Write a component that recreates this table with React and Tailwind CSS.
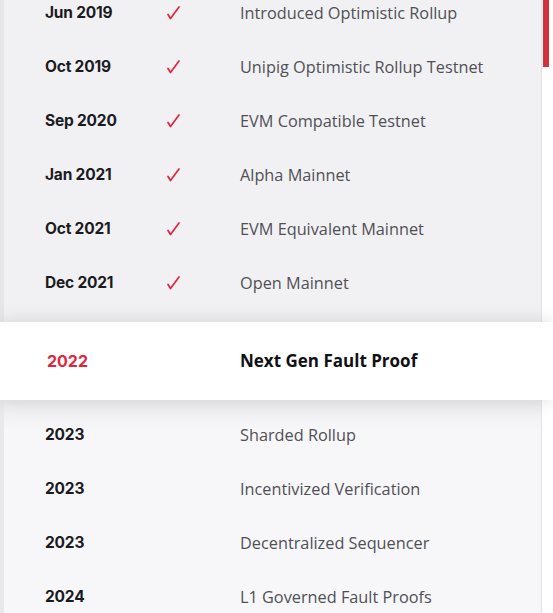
const done = [
  { date: 'Jun 2019', label: 'Introduced Optimistic Rollup' },
  { date: 'Oct 2019', label: 'Unipig Optimistic Rollup Testnet' },
  { date: 'Sep 2020', label: 'EVM Compatible Testnet' },
  { date: 'Jan 2021', label: 'Alpha Mainnet' },
  { date: 'Oct 2021', label: 'EVM Equivalent Mainnet' },
  { date: 'Dec 2021', label: 'Open Mainnet' },
];

const upcoming = [
  { date: '2023', label: 'Sharded Rollup' },
  { date: '2023', label: 'Incentivized Verification' },
  { date: '2023', label: 'Decentralized Sequencer' },
  { date: '2024', label: 'L1 Governed Fault Proofs' },
];

const Check = () => (
  <svg width="16" height="16" viewBox="0 0 16 16" fill="none">
    <path
      d="M3 9.5 L5.5 13.5 L14 2"
      stroke="#e0253f"
      strokeWidth="1.7"
      strokeLinecap="round"
      strokeLinejoin="round"
    />
  </svg>
);

const Row = ({ date, label, checked }) => (
  <div className="flex items-center h-[54px]">
    <div className="w-[161px] pl-[41px] shrink-0 text-[15.5px] font-bold text-[#1b1b1f] font-['Inter',sans-serif] tracking-[-0.2px]">
      {date}
    </div>
    <div className="w-[75px] shrink-0 flex">{checked && <Check />}</div>
    <div className="text-[16.3px] text-[#505055] font-['Open_Sans',sans-serif]">{label}</div>
  </div>
);

const Track = ({ thumb }) => (
  <div className="w-[12px] shrink-0 bg-white border-l border-[#e2e2e6] flex justify-start">
    {thumb && <div className="ml-[1px] w-[6px] h-[67px] bg-[#d4303d]" />}
  </div>
);

export default function App() {
  return (
    <div className="w-[553px] h-[613px] overflow-hidden bg-white">
      <div className="flex bg-[#f1f1f4]">
        <div className="flex-1 border-l-[4px] border-[#e6e6e9] -mt-[14px] pb-[12px]">
          {done.map((r, i) => (
            <Row key={i} {...r} checked />
          ))}
        </div>
        <Track thumb />
      </div>

      <div className="relative z-10 flex items-center h-[78px] bg-white shadow-[0_0_18px_rgba(0,0,0,0.13)]">
        <div className="w-[240px] pl-[47px] shrink-0 text-[16px] font-bold text-[#e0253f] font-['Inter',sans-serif]">
          2022
        </div>
        <div className="text-[17px] font-bold text-[#111114] font-['Open_Sans',sans-serif]">
          Next Gen Fault Proof
        </div>
      </div>

      <div className="flex bg-[#f6f6f8] bg-gradient-to-b from-[#ececef] to-[#f7f7f9] to-[30px]">
        <div className="flex-1 border-l-[4px] border-[#e9e9ec] pt-[8px]">
          {upcoming.map((r, i) => (
            <Row key={i} {...r} />
          ))}
        </div>
        <Track />
      </div>
    </div>
  );
}
